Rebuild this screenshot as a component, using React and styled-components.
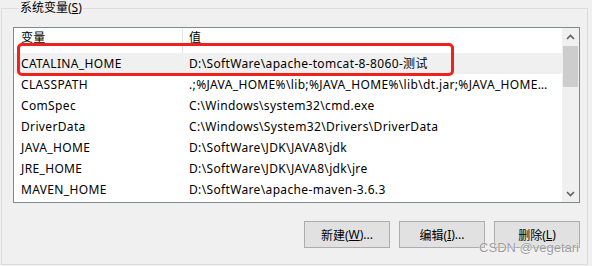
import styled, { createGlobalStyle } from "styled-components";

const GlobalStyle = createGlobalStyle`
	html, body {
		margin: 0;
		padding: 0;
		background: #f0f0f0;
	}
	body {
		font-family: "Noto Sans", "Noto Sans CJK SC", sans-serif;
		font-size: 12px;
		color: #000;
	}
`;

const variables = [
	{ name: "CATALINA_HOME", value: "D:\\SoftWare\\apache-tomcat-8-8060-测试", selected: true },
	{ name: "CLASSPATH", value: ".;%JAVA_HOME%\\lib;%JAVA_HOME%\\lib\\dt.jar;%JAVA_HOME%\\lib\\tools.jar" },
	{ name: "ComSpec", value: "C:\\Windows\\system32\\cmd.exe" },
	{ name: "DriverData", value: "C:\\Windows\\System32\\Drivers\\DriverData" },
	{ name: "JAVA_HOME", value: "D:\\SoftWare\\JDK\\JAVA8\\jdk" },
	{ name: "JRE_HOME", value: "D:\\SoftWare\\JDK\\JAVA8\\jdk\\jre" },
	{ name: "MAVEN_HOME", value: "D:\\SoftWare\\apache-maven-3.6.3" },
];

export default function App() {
	return (
		<Page>
			<GlobalStyle />
			<Group>
				<Legend>
					系统变量(<u>S</u>)
				</Legend>
				<ListBox>
					<ListArea>
						<HeaderRow>
							<NameCell>变量</NameCell>
							<ValueCell $divider>值</ValueCell>
						</HeaderRow>
						{variables.map((v) => (
							<Row key={v.name} $selected={v.selected}>
								<NameCell>{v.name}</NameCell>
								<ValueCell>{v.value}</ValueCell>
							</Row>
						))}
						<Highlight />
					</ListArea>
					<ScrollBar>
						<Arrow>
							<svg width="9" height="6" viewBox="0 0 9 6">
								<path d="M1 5 L4.5 1.5 L8 5" fill="none" stroke="#606060" strokeWidth="1.6" />
							</svg>
						</Arrow>
						<Track>
							<Thumb />
						</Track>
						<Arrow>
							<svg width="9" height="6" viewBox="0 0 9 6">
								<path d="M1 1 L4.5 4.5 L8 1" fill="none" stroke="#606060" strokeWidth="1.6" />
							</svg>
						</Arrow>
					</ScrollBar>
				</ListBox>
				<ButtonRow>
					<Button>
						新建(<u>W</u>)...
					</Button>
					<Button>
						编辑(<u>I</u>)...
					</Button>
					<Button>
						删除(<u>L</u>)
					</Button>
					<Watermark>CSDN @vegetari</Watermark>
				</ButtonRow>
			</Group>
		</Page>
	);
}

const Page = styled.div`
	width: 592px;
	height: 266px;
	padding: 0 4px 1px 1px;
	box-sizing: border-box;
	overflow: hidden;
`;

const Group = styled.fieldset`
	margin: 0;
	min-width: 0;
	height: 265px;
	box-sizing: border-box;
	border: 1px solid #dcdcdc;
	padding: 11px 8px 0 11px;
	display: flex;
	flex-direction: column;
`;

const Legend = styled.legend`
	padding: 0 1px;
	margin-left: 6px;
	line-height: 16px;
	font-size: 12px;
	u {
		text-decoration: underline;
		text-underline-offset: 1px;
	}
`;

const ListBox = styled.div`
	width: 567px;
	height: 176px;
	box-sizing: border-box;
	border: 1px solid #828790;
	background: #fff;
	display: flex;
	overflow: hidden;
`;

const ListArea = styled.div`
	position: relative;
	flex: 1;
	min-width: 0;
	letter-spacing: 0.35px;
`;

const HeaderRow = styled.div`
	display: flex;
	height: 25px;
	line-height: 20px;
`;

const Row = styled.div`
	display: flex;
	height: 21px;
	line-height: 21px;
	background: ${(p) => (p.$selected ? "#f0f0f0" : "#fff")};
`;

const NameCell = styled.div`
	width: 168px;
	padding-left: 7px;
	box-sizing: border-box;
	white-space: nowrap;
	overflow: hidden;
`;

const ValueCell = styled.div`
	flex: 1;
	min-width: 0;
	padding: 0 7px 0 6px;
	white-space: nowrap;
	overflow: hidden;
	text-overflow: ellipsis;
	border-left: 1px solid ${(p) => (p.$divider ? "#e5e5e5" : "transparent")};
`;

const Highlight = styled.div`
	position: absolute;
	left: 3px;
	top: 15px;
	width: 437px;
	height: 33px;
	box-sizing: border-box;
	border: 3px solid #f0201a;
	border-radius: 5px;
	pointer-events: none;
`;

const ScrollBar = styled.div`
	width: 17px;
	background: #f0f0f0;
	display: flex;
	flex-direction: column;
`;

const Arrow = styled.div`
	height: 17px;
	display: flex;
	align-items: center;
	justify-content: center;
`;

const Track = styled.div`
	flex: 1;
	padding: 1px 1px 0;
`;

const Thumb = styled.div`
	height: 41px;
	background: #cdcdcd;
`;

const ButtonRow = styled.div`
	position: relative;
	width: 567px;
	display: flex;
	justify-content: flex-end;
	gap: 9px;
	margin-top: 18px;
`;

const Button = styled.div`
	width: 86px;
	height: 27px;
	box-sizing: border-box;
	border: 1px solid #adadad;
	background: #e1e1e1;
	display: flex;
	align-items: center;
	justify-content: center;
	font-size: 12px;
	u {
		text-underline-offset: 1px;
	}
`;

const Watermark = styled.div`
	position: absolute;
	right: 1px;
	top: 19px;
	font-family: "Liberation Sans", Arial, sans-serif;
	font-size: 13px;
	color: #9a9a9a;
	text-shadow: 0 0 1px #fff, 0 0 1px #fff;
	pointer-events: none;
`;
